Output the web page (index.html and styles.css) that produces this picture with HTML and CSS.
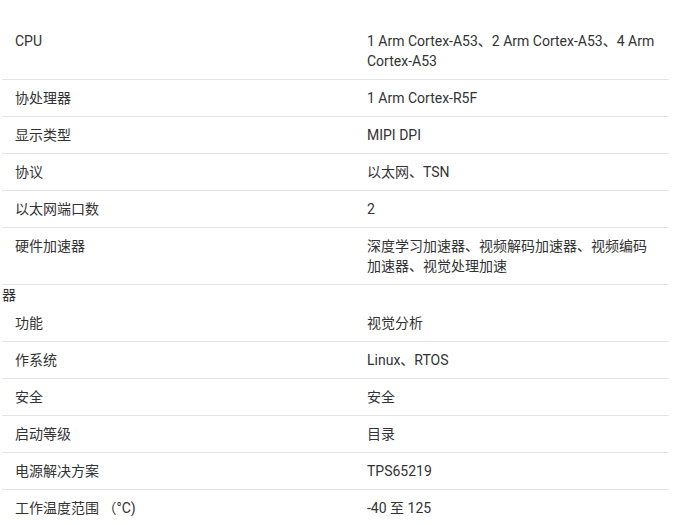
FILE: index.html
```html
<!DOCTYPE html>
<html lang="zh">
<head>
<meta charset="utf-8">
<link rel="stylesheet" href="styles.css">
</head>
<body>
<div class="specs">
  <div class="row"><div class="k">CPU</div><div class="v">1 Arm Cortex-A53、2 Arm Cortex-A53、4 Arm Cortex-A53</div></div>
  <div class="row"><div class="k">协处理器</div><div class="v">1 Arm Cortex-R5F</div></div>
  <div class="row"><div class="k">显示类型</div><div class="v">MIPI DPI</div></div>
  <div class="row"><div class="k">协议</div><div class="v">以太网、TSN</div></div>
  <div class="row"><div class="k">以太网端口数</div><div class="v">2</div></div>
  <div class="row"><div class="k">硬件加速器</div><div class="v">深度学习加速器、视频解码加速器、视频编码加速器、视觉处理加速</div></div>
  <div class="stray">器</div>
  <div class="row"><div class="k">功能</div><div class="v">视觉分析</div></div>
  <div class="row"><div class="k">作系统</div><div class="v">Linux、RTOS</div></div>
  <div class="row"><div class="k">安全</div><div class="v">安全</div></div>
  <div class="row"><div class="k">启动等级</div><div class="v">目录</div></div>
  <div class="row"><div class="k">电源解决方案</div><div class="v">TPS65219</div></div>
  <div class="row"><div class="k">工作温度范围 （°C)</div><div class="v">-40 至 125</div></div>
</div>
</body>
</html>
```
FILE: styles.css
```css
html, body {
  margin: 0;
  padding: 0;
  background: #fff;
}
body {
  font-family: Roboto, "Noto Sans CJK SC", sans-serif;
  font-size: 14px;
  line-height: 20px;
  color: #333;
}
.specs {
  margin: 23px 8px 0 2px;
}
.row {
  display: grid;
  grid-template-columns: 352px 1fr;
  border-bottom: 1px solid #e5e5e5;
}
.k, .v {
  padding: 8px 13px;
}
.stray {
  height: 20px;
}
```
